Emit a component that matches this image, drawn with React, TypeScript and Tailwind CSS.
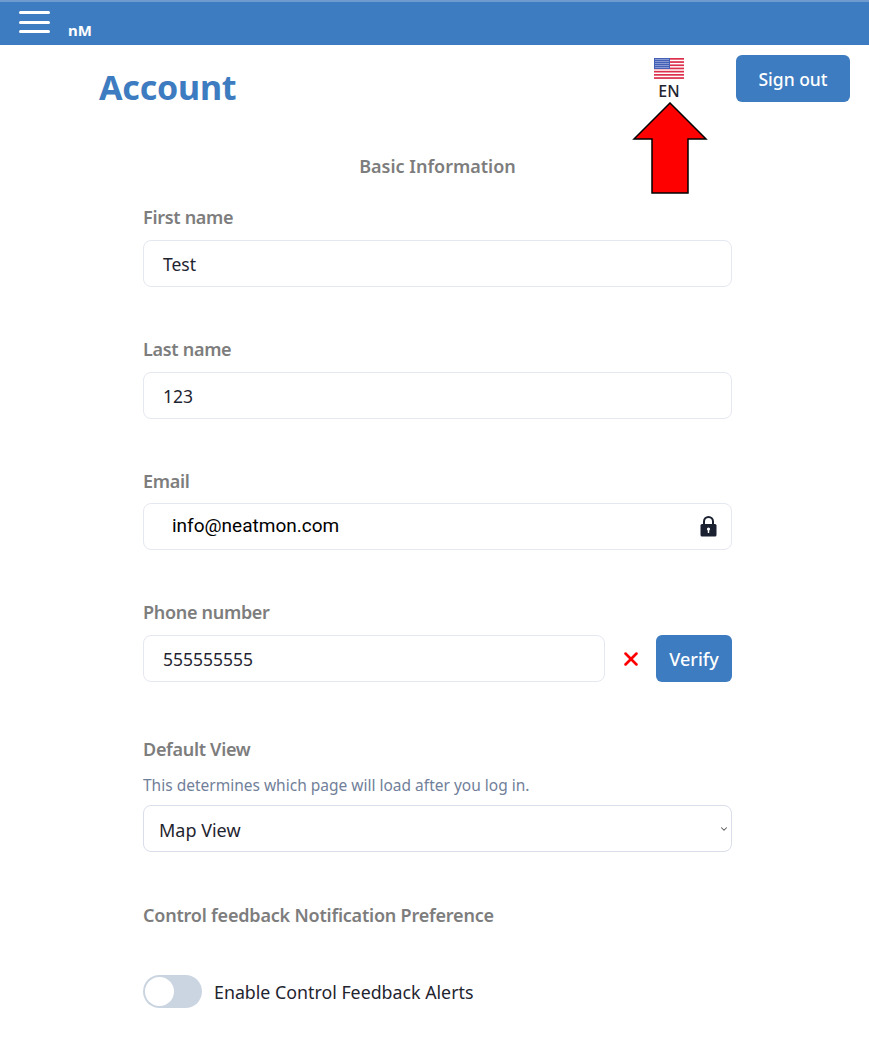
import { ChevronDown, X } from "lucide-react";

const font = { sans: "font-['Noto_Sans','Open_Sans',sans-serif]" };

function UsFlag() {
  const stripes = [0, 3.2, 6.4, 9.6, 12.8, 16, 19.2];
  const stars = [1, 3, 5, 7, 9];
  const cols = [1.5, 3.5, 5.5, 7.5, 9.5, 11.5, 13.5];
  return (
    <svg width="30" height="21" viewBox="0 0 30 21">
      <rect width="30" height="21" fill="#fff" />
      {stripes.map((y) => (
        <rect key={y} x="0" y={y} width="30" height="1.7" fill="#dc2f4b" />
      ))}
      <rect width="16" height="11" fill="#4460b5" />
      {stars.map((y) =>
        cols.map((x) => <rect key={`${x}-${y}`} x={x} y={y} width="1" height="1" fill="#c9d3f0" />),
      )}
    </svg>
  );
}

function Label({ children }: { children: React.ReactNode }) {
  return (
    <label className="block h-[23px] text-[18px] leading-[23px] font-semibold text-[#7d7d7d] tracking-[-0.3px]">
      {children}
    </label>
  );
}

const inputBox =
  "h-[47px] rounded-lg border border-[#e5e8f0] bg-white flex items-center text-[17.5px] text-[#1f2530]";

function App() {
  return (
    <div className={`relative w-[869px] h-[1045px] bg-white overflow-hidden ${font.sans}`}>
      <nav className="h-[45px] bg-[#3d7cc0] border-t-2 border-[#6f9ccf] flex items-start pl-[19px]">
        <div className="flex flex-col gap-[6.5px] w-[31px] mt-[9px]">
          <span className="h-[3px] rounded-full bg-white" />
          <span className="h-[3px] rounded-full bg-white" />
          <span className="h-[3px] rounded-full bg-white" />
        </div>
        <span className="ml-[18px] mt-[18px] text-[15px] leading-5 font-bold text-white">nM</span>
      </nav>

      <header className="h-[57px] mt-[10px] flex items-start">
        <h1 className="w-[137px] ml-[99px] mt-[9px] text-[34px] leading-[46px] font-bold text-[#3d7cc0] tracking-[-0.2px]">
          Account
        </h1>
        <div className="ml-[418px] mt-[3px] flex flex-col items-center w-[30px]">
          <UsFlag />
          <span className="text-[16px] leading-5 mt-[2px] font-medium text-[#1f2530]">EN</span>
        </div>
        <button className="ml-[52px] w-[114px] h-[47px] pt-[1px] rounded-md bg-[#3d7cc0] text-white text-[17.5px] font-medium">
          Sign out
        </button>
      </header>

      <svg className="absolute left-[632px] top-[102px]" width="76" height="93" viewBox="0 0 76 93">
        <path d="M38 1 L74 37 L56 37 L56 91 L20 91 L20 37 L2 37 Z" fill="#ff0000" stroke="#000" strokeWidth="1.5" />
      </svg>

      <form className="ml-[143px] w-[589px]">
        <h2 className="mt-[42px] h-6 text-center text-[18px] leading-6 font-semibold text-[#7d7d7d]">
          Basic Information
        </h2>

        <div className="mt-[28px]">
          <Label>First name</Label>
          <div className={`${inputBox} mt-[11px] pl-[19px] pt-[1px]`}>Test</div>
        </div>

        <div className="mt-[51px]">
          <Label>Last name</Label>
          <div className={`${inputBox} mt-[11px] pl-[19px] pt-[1px]`}>123</div>
        </div>

        <div className="mt-[51px]">
          <Label>Email</Label>
          <div className={`${inputBox} mt-[10px] pl-[28px] pr-[14px] justify-between`}>
            <span className="font-['Roboto',sans-serif] text-[19px] text-black">info@neatmon.com</span>
            <svg width="17" height="21" viewBox="0 0 17 21">
              <path d="M4 9V5.5a4.5 4.5 0 0 1 9 0V9" fill="none" stroke="#1b2130" strokeWidth="2" />
              <rect x="0.5" y="8" width="16" height="12.5" rx="1.5" fill="#1b2130" />
              <circle cx="8.5" cy="13" r="1.6" fill="#fff" />
              <rect x="7.8" y="13.5" width="1.4" height="3.5" fill="#fff" />
            </svg>
          </div>
        </div>

        <div className="mt-[51px]">
          <Label>Phone number</Label>
          <div className="mt-[11px] flex items-center">
            <div className={`${inputBox} w-[462px] pl-[19px] pt-[1px]`}>555555555</div>
            <X size={22} strokeWidth={2.8} className="ml-[15px] text-[#ff0000]" />
            <button
              type="button"
              className="ml-[14px] w-[76px] h-[47px] pt-[1px] rounded-md bg-[#3d7cc0] text-white text-[18px] font-medium"
            >
              Verify
            </button>
          </div>
        </div>

        <div className="mt-[56px]">
          <Label>Default View</Label>
          <p className="mt-[14px] h-5 text-[15.5px] leading-5 text-[#71809a]">
            This determines which page will load after you log in.
          </p>
          <div className="mt-[10px] h-[47px] pt-[3px] rounded-lg border border-[#d9deea] flex items-center justify-between pl-[15px] pr-[2px] text-[18px] text-[#1f2530]">
            Map View
            <ChevronDown size={10} strokeWidth={2.5} className="-mt-[3px] text-[#555]" />
          </div>
        </div>

        <h3 className="mt-[51px] h-6 text-[18px] leading-6 font-semibold text-[#7d7d7d] tracking-[-0.2px]">
          Control feedback Notification Preference
        </h3>

        <div className="mt-[48px] flex items-center">
          <span className="w-[59px] h-[33px] rounded-full bg-[#cbd5e1] flex items-center pl-[2px]">
            <span className="size-[29px] rounded-full bg-white" />
          </span>
          <span className="ml-[12px] pt-[1px] text-[17.8px] text-[#1f2530]">Enable Control Feedback Alerts</span>
        </div>
      </form>
    </div>
  );
}

export default App;
